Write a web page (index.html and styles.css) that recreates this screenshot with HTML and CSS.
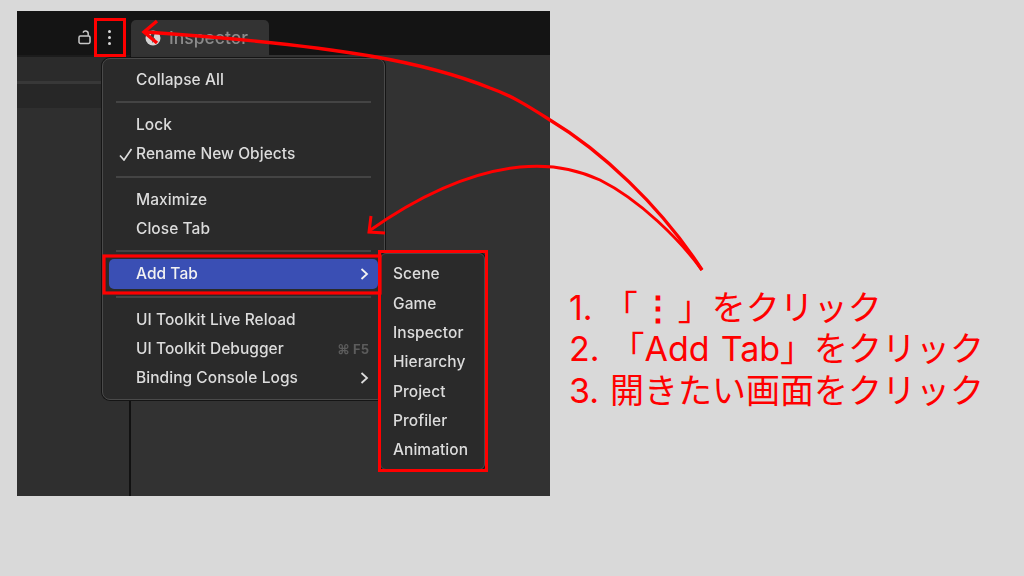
FILE: index.html
```html
<!DOCTYPE html>
<html lang="ja">
<head>
<meta charset="utf-8">
<title>Add Tab</title>
<link rel="stylesheet" href="styles.css">
</head>
<body>
<main class="slide">
  <section class="shot">
    <header class="topbar">
      <svg class="lock" width="14" height="16" viewBox="0 0 14 16"><path d="M5 2.6a2.7 2.7 0 0 1 5.2 1V5.8" fill="none" stroke="#c8c8c8" stroke-width="1.5"/><rect x="1" y="6" width="11" height="7.5" rx="1.4" fill="none" stroke="#c8c8c8" stroke-width="1.5"/></svg>
      <div class="dots"><i></i><i></i><i></i></div>
      <div class="tab">
        <svg width="16" height="16" viewBox="0 0 16 16"><circle cx="8" cy="8" r="7.5" fill="#d4d4d4"/><path d="M6.6 3.2 9.6 3.6 8.7 7.4 10 9 7.6 13 6.8 8.6 5 6.8Z" fill="#3a3a3a"/></svg>
        <span>Inspector</span>
      </div>
    </header>
    <div class="body">
      <div class="left">
        <div class="row-a"></div>
        <div class="row-b"></div>
      </div>
      <div class="right"></div>
    </div>
    <nav class="menu">
      <div class="item">Collapse All</div>
      <hr class="sep">
      <div class="item">Lock</div>
      <div class="item"><svg class="check" width="14" height="13" viewBox="0 0 14 13"><path d="M1 7.5 5 12 12.5 1" fill="none" stroke="currentColor" stroke-width="1.7"/></svg>Rename New Objects</div>
      <hr class="sep">
      <div class="item">Maximize</div>
      <div class="item">Close Tab</div>
      <hr class="sep">
      <div class="item active">Add Tab<svg class="chev" width="9" height="12" viewBox="0 0 9 12"><path d="M1.5 1 7 6 1.5 11" fill="none" stroke="currentColor" stroke-width="1.8"/></svg></div>
      <hr class="sep">
      <div class="item">UI Toolkit Live Reload</div>
      <div class="item">UI Toolkit Debugger<span class="key">⌘ F5</span></div>
      <div class="item">Binding Console Logs<svg class="chev" width="9" height="12" viewBox="0 0 9 12"><path d="M1.5 1 7 6 1.5 11" fill="none" stroke="currentColor" stroke-width="1.8"/></svg></div>
    </nav>
    <nav class="submenu">
      <div class="item">Scene</div>
      <div class="item">Game</div>
      <div class="item">Inspector</div>
      <div class="item">Hierarchy</div>
      <div class="item">Project</div>
      <div class="item">Profiler</div>
      <div class="item">Animation</div>
    </nav>
  </section>
  <ol class="steps">
    <li>1. 「<b>⋮</b>」をクリック</li>
    <li>2. 「Add Tab」をクリック</li>
    <li>3. 開きたい画面をクリック</li>
  </ol>
  <svg class="marks" width="1024" height="576" viewBox="0 0 1024 576">
    <g fill="none" stroke="#ff0000">
      <rect x="95.5" y="19.5" width="29" height="36" stroke-width="3"/>
      <rect x="104" y="256" width="276" height="37" stroke-width="3.2"/>
      <rect x="379.5" y="251.5" width="107" height="219" stroke-width="3"/>
      <path d="M702 270C660 205 600 150 550 120C525 104 510 95 490 88C430 64 350 46 145 32" stroke-width="3.4"/>
      <path d="M157 21 144 32 157 43" stroke-width="3.4"/>
      <path d="M702 270C680 240 640 200 600 180C570 166 540 165 520 167C470 172 420 195 369 231" stroke-width="3"/>
      <path d="M371 216 369 232 385 233" stroke-width="3"/>
    </g>
  </svg>
</main>
</body>
</html>
```
FILE: styles.css
```css
* { box-sizing: border-box; }
html, body { margin: 0; padding: 0; }
body { width: 1024px; height: 576px; overflow: hidden; background: #d9d9d9; }
.slide {
  position: relative;
  width: 1024px;
  height: 576px;
  padding: 11px 0 0 17px;
  font-family: Inter, "Liberation Sans", sans-serif;
}
.shot {
  position: relative;
  width: 533px;
  height: 485px;
  background: #303030;
  display: flex;
  flex-direction: column;
  overflow: hidden;
}
.topbar {
  height: 44px;
  flex: none;
  background: #141414;
  display: flex;
  align-items: flex-end;
  padding-left: 61px;
}
.lock { margin: 0 0 9px 0; }
.dots {
  width: 30px;
  height: 36px;
  margin-left: 2px;
  display: flex;
  flex-direction: column;
  align-items: center;
  justify-content: center;
  gap: 3px;
}
.dots i { width: 3px; height: 3px; border-radius: 50%; background: #d8d8d8; }
.tab {
  width: 138px;
  height: 35px;
  margin-left: 7px;
  background: #333;
  border-radius: 5px 5px 0 0;
  display: flex;
  align-items: center;
  gap: 8px;
  padding-left: 14px;
  color: #8b8b8b;
  font-size: 17.5px;
  font-weight: 500;
  filter: blur(.5px);
}
.body { flex: 1; display: flex; }
.left {
  width: 114px;
  border-right: 2px solid #111;
  border-top: 2px solid #1c1c1c;
  background: #2f2f2f;
  display: flex;
  flex-direction: column;
}
.row-a { height: 24px; background: #2b2b2b; border-bottom: 3px solid #383838; box-sizing: content-box; }
.row-b { height: 24px; background: #272727; }
.right { flex: 1; background: #323232; }
.menu, .submenu {
  position: absolute;
  background: #2a2a2a;
  border: 1px solid #4a4a4a;
  box-shadow: 0 0 0 1px #151515;
  color: #dcdcdc;
  font-size: 15.5px;
  font-weight: 500;
  filter: blur(.4px);
}
.menu {
  left: 85px;
  top: 47px;
  width: 283px;
  height: 342px;
  border-radius: 8px;
  padding: 5.6px 6px;
}
.submenu {
  left: 363px;
  top: 242px;
  width: 105px;
  height: 217px;
  border-radius: 6px;
  padding: 5px 0;
}
.item {
  position: relative;
  height: 29.35px;
  display: flex;
  align-items: center;
  padding-left: 27px;
  white-space: nowrap;
  letter-spacing: .05px;
}
.submenu .item { padding-left: 12px; }
.sep {
  height: 2px;
  border: 0;
  background: #444;
  margin: 7.2px 7px 6.8px;
}
.check { position: absolute; left: 9.5px; top: 9px; }
.active {
  background: #3a4fb4;
  color: #f2f2f2;
  border-radius: 5px;
}
.chev { position: absolute; right: 9px; }
.key { position: absolute; right: 9px; color: #5c5c5c; font-size: 13px; font-weight: 700; }
.steps {
  position: absolute;
  left: 569px;
  top: 286.5px;
  margin: 0;
  padding: 0;
  list-style: none;
  color: #ff0000;
  font-size: 34px;
  line-height: 41.8px;
  word-spacing: 1.5px;
  white-space: nowrap;
  font-family: Inter, "Noto Sans CJK JP", sans-serif;
}
.steps b { font-weight: 900; padding: 0 3px; }
.marks { position: absolute; left: 0; top: 0; pointer-events: none; }
```
